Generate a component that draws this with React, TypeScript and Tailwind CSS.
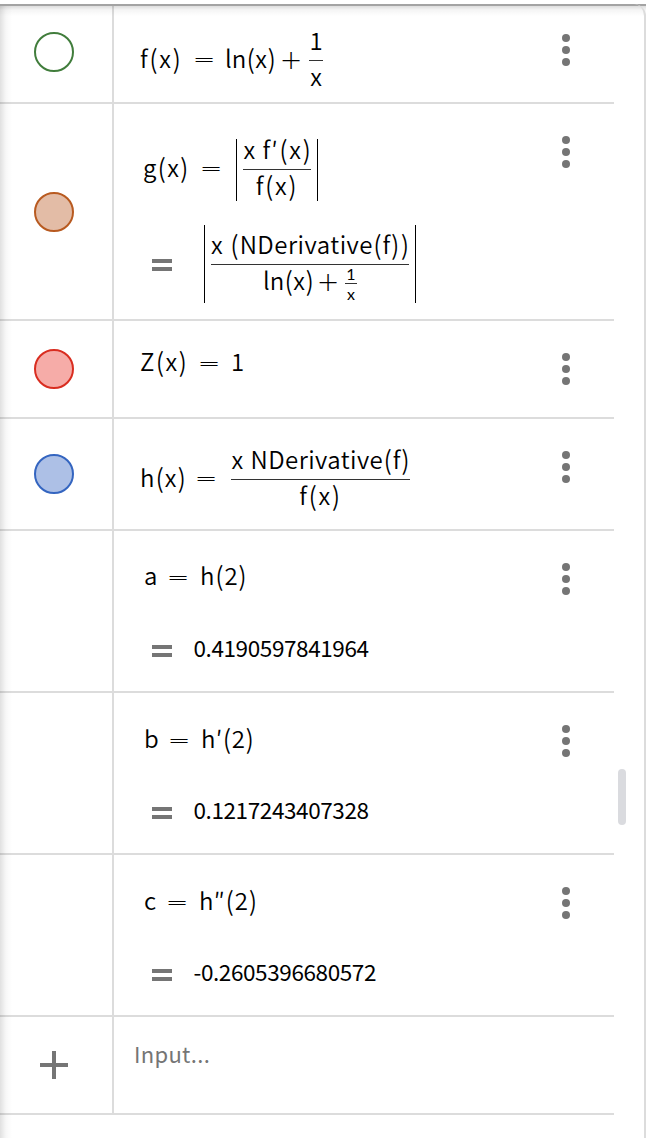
import type { ReactNode } from "react";

/** Math text; parentheses are taller and set a little apart. */
function M({ text, className = "" }: { text: string; className?: string }) {
  return (
    <span className={`block ${className}`}>
      {text.split(/([()])/).map((part, i) =>
        part === "(" || part === ")" ? (
          <span key={i} className="inline-block scale-y-[1.08] px-[0.6px]">
            {part}
          </span>
        ) : (
          part
        ),
      )}
    </span>
  );
}

/** A run of math text sitting on the formula's axis. */
function T({ text, className = "" }: { text: string; className?: string }) {
  return <M text={text} className={`shrink-0 pb-1.5 leading-[30px] ${className}`} />;
}

/** Wide, thin math operator. */
function Op({ children, className = "" }: { children: ReactNode; className?: string }) {
  return (
    <span
      className={`flex w-[18px] shrink-0 justify-center font-['DejaVu_Sans'] text-[27px] leading-[24px] font-extralight ${className}`}
    >
      {children}
    </span>
  );
}

function Eq() {
  return <Op className="mb-[3px] scale-y-75">=</Op>;
}

function Frac({ num, den, className = "" }: { num: ReactNode; den: ReactNode; className?: string }) {
  return (
    <span className={`flex shrink-0 flex-col ${className}`}>
      <span className="flex h-9 justify-center leading-[32px]">{num}</span>
      <span className="h-px bg-[#333]" />
      <span className="flex h-9 justify-center leading-[29px]">{den}</span>
    </span>
  );
}

function Dots({ className = "" }: { className?: string }) {
  return (
    <div className={`mr-11 ml-auto flex flex-col gap-1 ${className}`}>
      <i className="size-2 rounded-full bg-[#757575]" />
      <i className="size-2 rounded-full bg-[#757575]" />
      <i className="size-2 rounded-full bg-[#757575]" />
    </div>
  );
}

function Bars({ className = "" }: { className?: string }) {
  return (
    <div className={`flex w-5 shrink-0 flex-col gap-1 ${className}`}>
      <i className="h-1 bg-[#757575]" />
      <i className="h-1 bg-[#757575]" />
    </div>
  );
}

function Row({
  height,
  marble,
  dots = "mt-8",
  children,
}: {
  height: string;
  marble?: ReactNode;
  dots?: string;
  children: ReactNode;
}) {
  return (
    <div className={`flex w-[614px] shrink-0 border-b-2 border-[#dcdcdc] ${height}`}>
      <div className="flex w-[114px] shrink-0 items-center border-r-2 border-[#dcdcdc] pl-[34px]">{marble}</div>
      <div className="flex grow items-start">
        <div className="flex h-full flex-col">{children}</div>
        <Dots className={dots} />
      </div>
    </div>
  );
}

function Marble({ className }: { className: string }) {
  return <div className={`size-10 rounded-full border-2 ${className}`} />;
}

function Result({ children }: { children: ReactNode }) {
  return (
    <div className="mt-auto mb-[31px] flex items-center pl-[38px]">
      <Bars className="mt-2" />
      <span className="ml-[21.5px] text-[22.5px] leading-[26px] font-normal tracking-[-0.4px]">{children}</span>
    </div>
  );
}

export default function App() {
  return (
    <div className="relative h-[1138px] w-[646px] overflow-hidden bg-white font-['Noto_Sans_CJK_SC',sans-serif] text-[24px] font-[350] whitespace-nowrap text-black">
      <div className="flex flex-col pt-1">
        <Row height="h-[100px]" dots="mt-[30px]" marble={<Marble className="-mt-0.5 border-[#417d3c]" />}>
          <div className="flex items-center pt-5 pl-[26px]">
            <T text="f(x)" className="w-[55px] tracking-[1.2px]" />
            <Eq />
            <T text="ln(x)" className="ml-3 w-[57px]" />
            <Op className="mb-[2px]">+</Op>
            <Frac className="ml-[9px] w-[14px]" num="1" den="x" />
          </div>
        </Row>

        <Row height="h-[217px]" marble={<Marble className="border-[#b85a20] bg-[#e3bca6]" />}>
          <div className="flex items-center pt-[29px] pl-[29px]">
            <T text="g(x)" className="w-[59px] tracking-[0.8px]" />
            <Eq />
            <span className="ml-[16px] h-[62px] w-px bg-black" />
            <Frac
              className="ml-[6px] w-[68px]"
              num={
                <>
                  <M text="x" className="w-[19px]" />
                  <M text="f′(x)" className="w-[48px] tracking-[1.2px]" />
                </>
              }
              den={<M text="f(x)" className="tracking-[1.2px]" />}
            />
            <span className="ml-[6px] h-[62px] w-px bg-black" />
          </div>
          <div className="mt-[19px] flex items-center pl-[38px]">
            <Bars className="mt-[2px]" />
            <span className="ml-[32px] h-[78px] w-px bg-black" />
            <Frac
              className="ml-[6px] w-[198px]"
              num={
                <>
                  <M text="x" className="w-[19px]" />
                  <M text="(NDerivative(f))" className="w-[179px] tracking-[0.5px]" />
                </>
              }
              den={
                <>
                  <M text="ln(x)" className="w-[56px]" />
                  <Op className="mt-[5px]">+</Op>
                  <span className="ml-[8px] flex w-[12px] flex-col text-center font-['Lato'] text-[16px] font-normal">
                    <span className="h-[18px] leading-[18px]">1</span>
                    <span className="h-px shrink-0 bg-[#333]" />
                    <span className="h-[16px] leading-[19px]">x</span>
                  </span>
                </>
              }
            />
            <span className="ml-[6px] h-[78px] w-px bg-black" />
          </div>
        </Row>

        <Row height="h-[98px]" marble={<Marble className="border-[#d92d20] bg-[#f6aca8]" />}>
          <div className="flex items-center pt-[25px] pl-[26px]">
            <T text="Z(x)" className="w-[60px] tracking-[1px]" />
            <Eq />
            <T text="1" className="ml-[13px]" />
          </div>
        </Row>

        <Row height="h-[112px]" marble={<Marble className="border-[#3465c0] bg-[#adc0e6]" />}>
          <div className="flex items-center pt-6 pl-[26px]">
            <T text="h(x)" className="w-[57px] tracking-[0.6px]" />
            <Eq />
            <Frac
              className="ml-[16px] w-[179px]"
              num={
                <>
                  <M text="x" className="w-[19px]" />
                  <M text="NDerivative(f)" className="w-[159px] tracking-[0.45px]" />
                </>
              }
              den={<M text="f(x)" className="tracking-[1.2px]" />}
            />
          </div>
        </Row>

        <Row height="h-[162px]">
          <div className="flex items-center pt-[29px] pl-[30px]">
            <T text="a" className="w-[25px]" />
            <Eq />
            <T text="h(2)" className="ml-[13px] tracking-[0.4px]" />
          </div>
          <Result>0.4190597841964</Result>
        </Row>

        <Row height="h-[162px]">
          <div className="flex items-center pt-[30px] pl-[30px]">
            <T text="b" className="w-[26px]" />
            <Eq />
            <T text="h′(2)" className="ml-[13px] tracking-[0.2px]" />
          </div>
          <Result>0.1217243407328</Result>
        </Row>

        <Row height="h-[162px]">
          <div className="flex items-center pt-[30px] pl-[30px]">
            <T text="c" className="w-[24px]" />
            <Eq />
            <T text="h″(2)" className="ml-[13px] tracking-[0.4px]" />
          </div>
          <Result>-0.2605396680572</Result>
        </Row>

        <div className="flex h-[98px] w-[614px] border-b-2 border-[#dcdcdc]">
          <div className="flex w-[114px] items-center border-r-2 border-[#dcdcdc] pl-10">
            <svg width="28" height="28" viewBox="0 0 28 28" fill="#757575">
              <path d="M12 0h4v12h12v4H16v12h-4V16H0v-4h12z" />
            </svg>
          </div>
          <div className="pt-5 pl-[20px] text-[22px] leading-[32px] font-normal tracking-[0.3px] text-[#757575]">
            Input...
          </div>
        </div>
      </div>

      <div className="absolute top-1 left-0 h-full w-3 bg-linear-to-r from-black/12 via-black/3 to-transparent" />
      <div className="absolute top-1 left-0 h-3 w-full bg-linear-to-b from-black/18 via-black/4 to-transparent" />
      <div className="absolute top-1 left-0 h-[2px] w-full bg-[#a3a3a3]" />
      <div className="absolute top-1 right-0 h-full w-4 rounded-tr-xl border-r-2 border-[#dcdcdc]" />
      <div className="absolute top-[769px] left-[618px] h-14 w-2 rounded-full bg-[#dadbdf]" />
    </div>
  );
}
